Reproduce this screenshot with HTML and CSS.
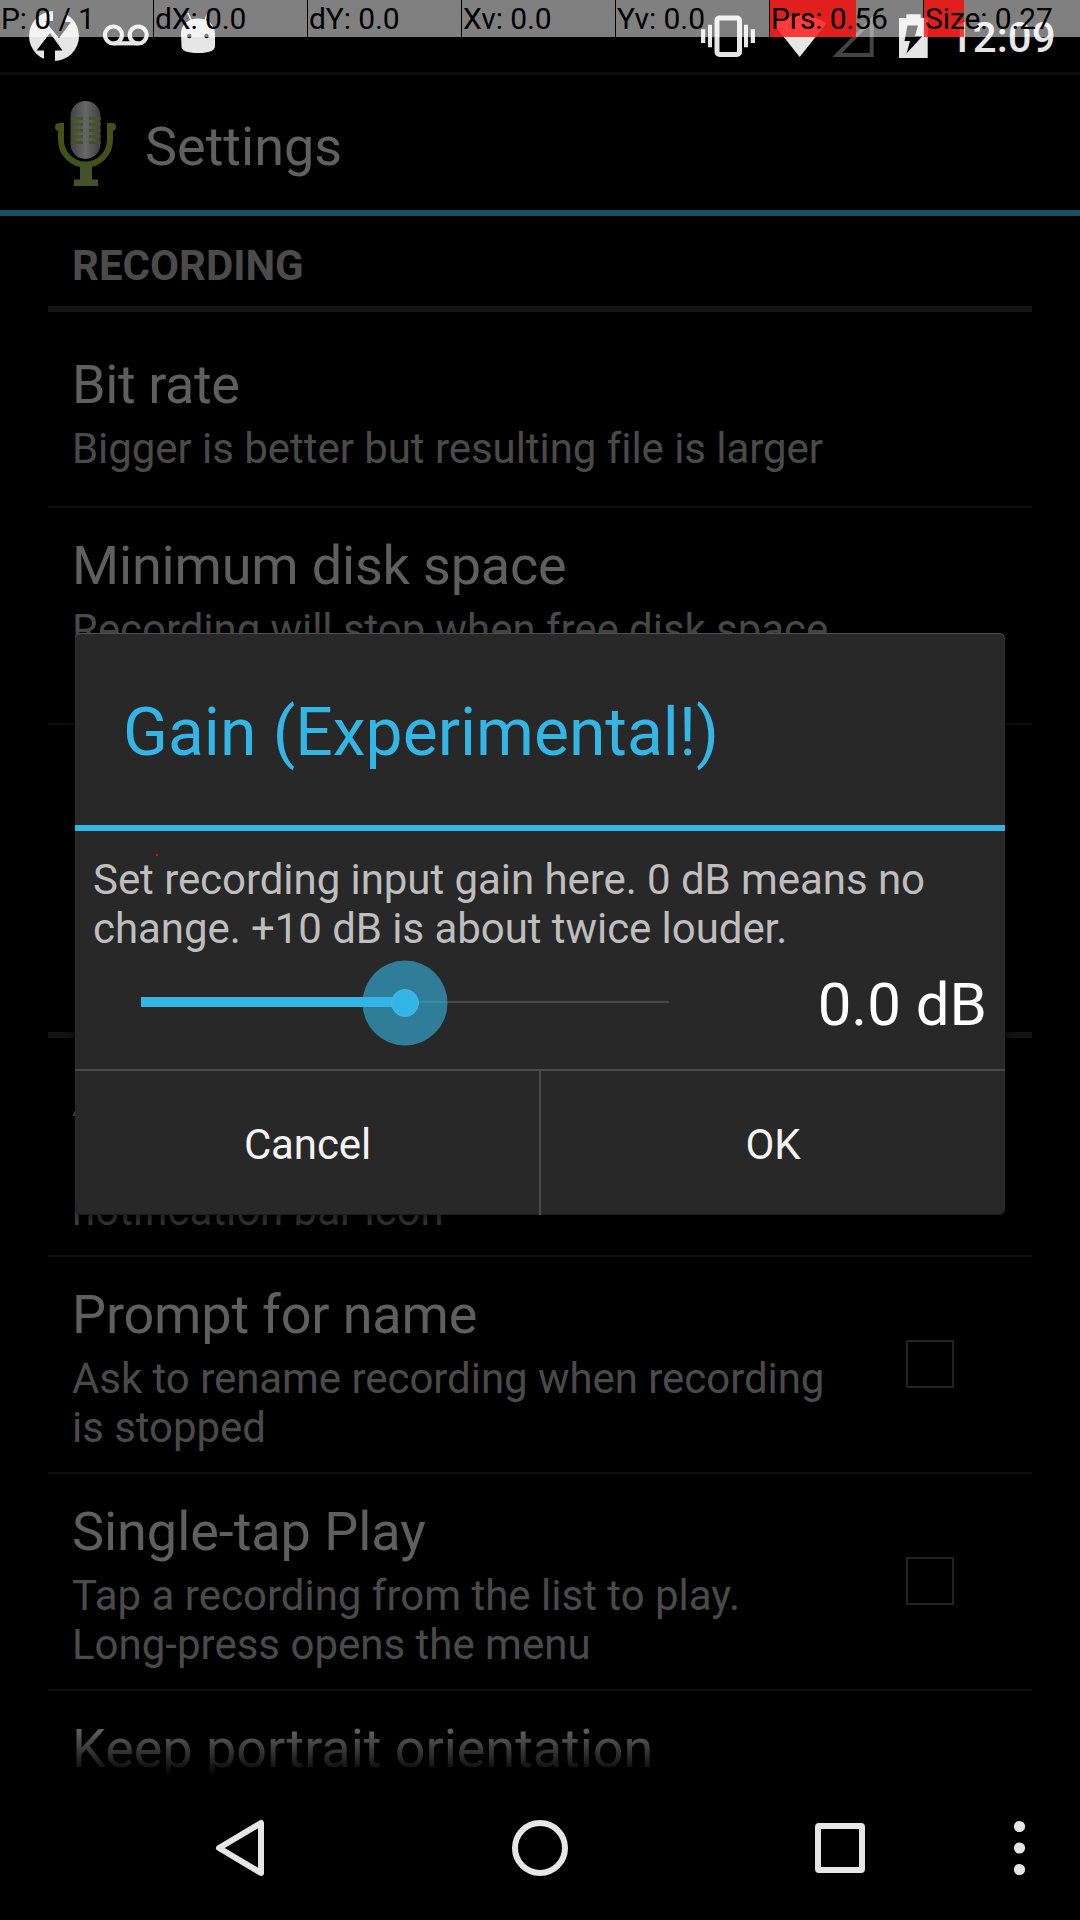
FILE: index.html
```html
<!DOCTYPE html>
<html lang="en">
<head>
<meta charset="utf-8">
<title>Settings</title>
<link rel="stylesheet" href="styles.css">
</head>
<body>
<div class="screen">
  <div class="status-bar">
    <svg class="status-left" width="240" height="72" viewBox="0 0 240 72">
      <circle cx="54" cy="36" r="25" fill="#e6e6e6"/>
      <path d="M50 33l12.500 17.500h-7.500V62H44V50.500h-7.500zM53 10h12v12h6L59 38 45 21h8z" fill="#000"/>
      <g fill="none" stroke="#e6e6e6" stroke-width="4.200"><circle cx="113.500" cy="35" r="8.500"/><circle cx="138.200" cy="35" r="8.500"/><path d="M113.500 43.300h24.700"/></g>
      <path d="M181 34C181 24 189 18.500 198 18.500S215 24 215 34V46Q215 53 198 53T181.500 46z" fill="#e6e6e6"/>
      <path d="M188 13l4 9M208 13l-4 9" stroke="#e6e6e6" stroke-width="1.500"/>
      <circle cx="189.300" cy="36" r="2.200"/><circle cx="206.500" cy="36" r="2.200"/>
    </svg>
    <svg class="status-right" width="240" height="72" viewBox="700 0 240 72">
      <rect x="717" y="18" width="22.500" height="36.500" rx="2.500" fill="none" stroke="#e6e6e6" stroke-width="5"/>
      <path d="M701 29.300h4.300V43H701zM708 24.700h4v22.600h-4zM744 24.700h4v22.600h-4zM750.700 29.300h4.300V43h-4.300z" fill="#e6e6e6"/>
      <path d="M799.700 57L773 23.500Q785 15 799.700 15T826.300 23.500z" fill="#e6e6e6"/>
      <path d="M837 55H871.700V20z" fill="none" stroke="#444" stroke-width="4"/>
      <path d="M906.300 14.300h14.400V18h7v40H899V18h7.300z" fill="#e6e6e6"/>
      <path d="M907.500 25.500h10.500l-3 10.500h7.500L906.500 53.500 910 41h-5.500z" fill="#000"/>
    </svg>
    <span class="clock">12:09</span>
  </div>

  <div class="action-bar">
    <svg width="62" height="88" viewBox="0 0 62 88">
      <defs><linearGradient id="mic" x1="0" x2="1"><stop offset="0" stop-color="#424242"/><stop offset=".5" stop-color="#666"/><stop offset="1" stop-color="#404040"/></linearGradient></defs>
      <path d="M6 26V40A24 24 0 0 0 55 40V26" fill="none" stroke="#435218" stroke-width="6"/>
      <path d="M3 23h6v8H3zM52 23h6v8h-6z" fill="#435218"/>
      <circle cx="4" cy="27" r="4" fill="#435218"/><circle cx="57" cy="27" r="4" fill="#435218"/>
      <path d="M25 64h12v15.500h6V86H19v-6.500h6z" fill="#43522a"/>
      <rect x="15.500" y="1" width="30" height="58" rx="15" fill="url(#mic)"/>
      <path d="M16 18.500h12M34 18.500h11.500M16 24.500h12M34 24.500h11.500M16 30.500h12M34 30.500h11.500M16 36.500h12M34 36.500h11.500M16 42.500h12M34 42.500h11.500" stroke="#475421" stroke-width="3"/>
    </svg>
    <h1 class="action-title">Settings</h1>
  </div>

  <div class="list">
    <h2 class="section">RECORDING</h2>
    <div class="item single">
      <div class="item-text"><div class="title">Bit rate</div><div class="summary">Bigger is better but resulting file is larger</div></div>
    </div>
    <div class="item">
      <div class="item-text"><div class="title">Minimum disk space</div><div class="summary">Recording will stop when free disk space</div></div>
    </div>
    <div class="item last"></div>
    <div class="section"></div>
    <div class="item after-section">
      <div class="item-text"><div class="title">A</div><div class="summary"><br>notification bar icon</div></div>
    </div>
    <div class="item">
      <div class="item-text"><div class="title">Prompt for name</div><div class="summary">Ask to rename recording when recording<br>is stopped</div></div>
      <span class="checkbox"></span>
    </div>
    <div class="item">
      <div class="item-text"><div class="title loose">Single-tap Play</div><div class="summary loose">Tap a recording from the list to play.<br>Long-press opens the menu</div></div>
      <span class="checkbox"></span>
    </div>
    <div class="item">
      <div class="item-text"><div class="title loose">Keep portrait orientation</div></div>
    </div>
    <div class="fade"></div>
  </div>

  <div class="nav-bar">
    <svg width="1080" height="144" viewBox="0 0 1080 144" fill="none" stroke="#e6e6e6" stroke-width="6" stroke-linejoin="round">
      <path d="M219 72L261 47V97z"/>
      <circle cx="540" cy="72" r="25"/>
      <rect x="818" y="50" width="44" height="44" rx="1"/>
      <g fill="#e6e6e6" stroke="none"><circle cx="1019.500" cy="50.500" r="5.600"/><circle cx="1019.500" cy="72" r="5.600"/><circle cx="1019.500" cy="93.500" r="5.600"/></g>
    </svg>
  </div>

  <div class="dialog">
    <div class="dialog-title">Gain (Experimental!)</div>
    <div class="dialog-body">
      <p class="message">Set recording input gain here. 0 dB means no<br>change. +10 dB is about twice louder.</p>
      <div class="gain-row">
        <svg width="576" height="96" viewBox="0 0 576 96">
          <path d="M24 47H552" stroke="#484848" stroke-width="2"/>
          <path d="M24 47H288" stroke="#33b5e5" stroke-width="10"/>
          <circle cx="288" cy="48" r="42.500" fill="#33b5e5" fill-opacity=".6"/>
          <circle cx="288" cy="48" r="13.500" fill="#33b5e5" stroke="#45b9e4"/>
        </svg>
        <span class="gain-value">0.0 dB</span>
      </div>
    </div>
    <div class="buttons"><div class="button">Cancel</div><div class="button">OK</div></div>
  </div>

  <div class="pointer-bar">
    <span class="cell">P: 0 / 1</span>
    <span class="cell">dX: 0.0</span>
    <span class="cell">dY: 0.0</span>
    <span class="cell">Xv: 0.0</span>
    <span class="cell">Yv: 0.0</span>
    <span class="cell pressure">Prs: 0.56</span>
    <span class="cell size">Size: 0.27</span>
  </div>
  <div class="touch-point"></div>
</div>
</body>
</html>
```
FILE: styles.css
```css
* { box-sizing: border-box; margin: 0; padding: 0; }

body {
  width: 1080px;
  height: 1920px;
  overflow: hidden;
  background: #000;
  font-family: Roboto, sans-serif;
}

svg { display: block; flex: none; }

.screen {
  position: relative;
  display: flex;
  flex-direction: column;
  width: 1080px;
  height: 1920px;
  overflow: hidden;
}

.status-bar {
  display: flex;
  align-items: center;
  height: 72px;
  flex: none;
}
.status-right { margin-left: 460px; }
.clock {
  margin-left: 9px;
  color: #e6e6e6;
  font-size: 42px;
  font-weight: 500;
  line-height: 49px;
  padding-top: 2px;
}

.action-bar {
  display: flex;
  align-items: center;
  gap: 28px;
  flex: none;
  height: 144px;
  padding-left: 55px;
  padding-top: 3px;
  border-top: 3px solid #0c0c0c;
  border-bottom: 6px solid #194e63;
}
.action-title {
  color: #606060;
  font-size: 54px;
  font-weight: 400;
  line-height: 64px;
  padding-top: 5px;
}

.list {
  position: relative;
  height: 1560px;
  overflow: hidden;
  padding: 0 48px;
}
.section {
  height: 96px;
  padding: 25px 24px 0;
  border-bottom: 6px solid #141414;
  color: #4b4b4b;
  font-size: 42px;
  font-weight: 700;
  line-height: 49px;
}
.item {
  display: flex;
  justify-content: space-between;
  align-items: center;
  height: 217px;
  padding: 26px 78px 20px 24px;
  border-bottom: 2px solid #0f0f0f;
}
.item.single { height: 196px; padding-top: 41px; padding-bottom: 33px; }
.item.single .title { letter-spacing: -.4px; }
.item.last { border-bottom-color: transparent; }
.item.after-section { height: 219px; padding-top: 28px; }
.item-text { align-self: flex-start; white-space: nowrap; }
.title {
  margin-bottom: 7px;
  color: #5f5f5f;
  font-size: 54px;
  line-height: 64px;
  letter-spacing: -.18px;
}
.title.loose { letter-spacing: -.05px; }
.summary {
  color: #4a4a4a;
  font-size: 42px;
  line-height: 49px;
  letter-spacing: -.05px;
}
.summary.loose { letter-spacing: 0; }
.checkbox {
  width: 48px;
  height: 48px;
  border: 2px solid #222;
  margin-top: -8px;
}
.fade {
  position: absolute;
  left: 0;
  right: 0;
  bottom: 0;
  height: 45px;
  background: linear-gradient(transparent, #000);
}

.nav-bar { flex: none; height: 144px; }

.dialog {
  position: absolute;
  left: 75px;
  top: 633px;
  width: 930px;
  height: 582px;
  border-radius: 6px;
  background: #282828;
  box-shadow: inset 0 1px 0 #505050, inset 0 -1px 0 #1c1c1c, 0 9px 20px rgba(0, 0, 0, .65);
}
.dialog-title {
  height: 198px;
  padding: 61px 48px 0;
  border-bottom: 6px solid #33b5e5;
  color: #33b5e5;
  font-size: 66px;
  line-height: 77px;
}
.dialog-body { height: 238px; padding: 24px 18px 0; }
.message {
  color: #bebebe;
  font-size: 42px;
  line-height: 49px;
  letter-spacing: -.06px;
  white-space: nowrap;
}
.gain-row {
  display: flex;
  align-items: center;
  justify-content: space-between;
  height: 96px;
  margin-top: 2px;
  padding-left: 24px;
}
.gain-value {
  color: #fff;
  font-size: 60px;
  line-height: 70px;
  padding-top: 4px;
}
.buttons {
  display: grid;
  grid-template-columns: 1fr 1fr;
  height: 146px;
  border-top: 2px solid #4a4a4a;
}
.button {
  display: flex;
  align-items: center;
  justify-content: center;
  padding-top: 3px;
  color: #f3f3f3;
  font-size: 42px;
  letter-spacing: -.1px;
}
.button + .button { border-left: 2px solid #4a4a4a; margin-left: -1px; }

.pointer-bar {
  position: absolute;
  left: 0;
  top: 0;
  display: grid;
  grid-template-columns: repeat(7, 153px);
  column-gap: 1px;
  width: 1080px;
  height: 37px;
}
.cell {
  padding-left: 1px;
  background: rgba(255, 255, 255, .5);
  color: #000;
  font-size: 30px;
  line-height: 37px;
  letter-spacing: -.1px;
  white-space: nowrap;
}
.pressure { background: linear-gradient(90deg, rgba(255, 0, 0, .76) 86px, transparent 86px), rgba(255, 255, 255, .5); }
.size { width: 156px; background: linear-gradient(90deg, rgba(255, 0, 0, .76) 40px, transparent 40px), rgba(255, 255, 255, .5); }

.touch-point {
  position: absolute;
  left: 156px;
  top: 854px;
  width: 2px;
  height: 2px;
  background: #f00;
}
```
